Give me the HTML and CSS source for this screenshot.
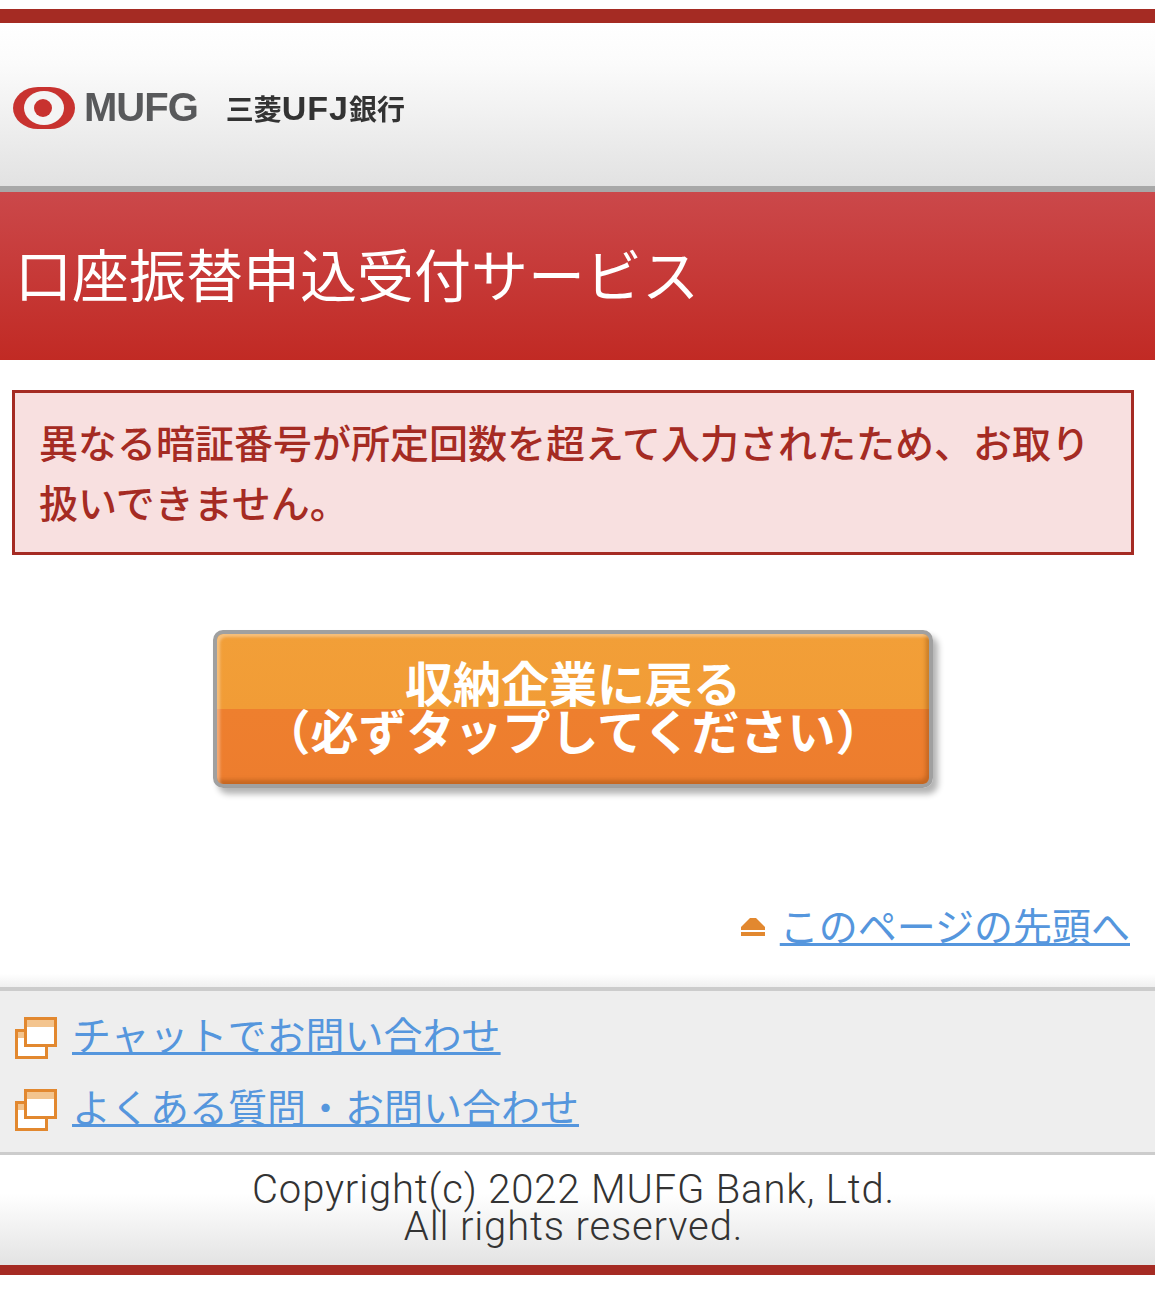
FILE: index.html
```html
<!DOCTYPE html>
<html lang="ja">
<head>
    <meta charset="UTF-8">
    <title>口座振替申込受付サービス</title>
    <link rel="stylesheet" href="styles.css">
</head>
<body>

<header class="site-header">
    <div class="logo">
        <svg class="logo-mark" viewBox="0 0 62 42" width="62" height="42" aria-hidden="true">
            <rect width="62" height="42" rx="25" ry="21" fill="#c8322f"/>
            <ellipse cx="31" cy="21" rx="20" ry="17" fill="#f4f4f4"/>
            <circle cx="30" cy="21" r="9" fill="#c8322f"/>
        </svg>
        <span class="logo-mufg">MUFG</span>
        <span class="logo-bank">三菱<span class="logo-ufj">UFJ</span>銀行</span>
    </div>
</header>

<h1 class="page-title">口座振替申込受付サービス</h1>

<div class="error-box">異なる暗証番号が所定回数を超えて入力されたため、お取り扱いできません。</div>

<div class="button-row">
    <button class="back-button">収納企業に戻る<br>（必ずタップしてください）</button>
</div>

<div class="page-top">
    <svg class="page-top-icon" viewBox="0 0 24 18" width="24" height="18" aria-hidden="true">
        <path d="M9 0 H15 L24 9 V12 H0 V9 Z" fill="#e2882f"/>
        <rect x="0" y="14" width="24" height="4" fill="#e2882f"/>
    </svg>
    <a href="#">このページの先頭へ</a>
</div>

<nav class="footer-links">
    <div class="footer-link">
        <svg class="window-icon" viewBox="0 0 42 42" width="42" height="42" aria-hidden="true">
            <rect x="1.5" y="13.5" width="30" height="27" fill="#fff" stroke="#e2882f" stroke-width="3"/>
            <rect x="3" y="15" width="27" height="6" fill="#f3c48e"/>
            <rect x="10.5" y="1.5" width="30" height="27" fill="#fff" stroke="#e2882f" stroke-width="3"/>
            <rect x="12" y="3" width="27" height="7" fill="#f3c48e"/>
        </svg>
        <a href="#">チャットでお問い合わせ</a>
    </div>
    <div class="footer-link">
        <svg class="window-icon" viewBox="0 0 42 42" width="42" height="42" aria-hidden="true">
            <rect x="1.5" y="13.5" width="30" height="27" fill="#fff" stroke="#e2882f" stroke-width="3"/>
            <rect x="3" y="15" width="27" height="6" fill="#f3c48e"/>
            <rect x="10.5" y="1.5" width="30" height="27" fill="#fff" stroke="#e2882f" stroke-width="3"/>
            <rect x="12" y="3" width="27" height="7" fill="#f3c48e"/>
        </svg>
        <a href="#">よくある質問・お問い合わせ</a>
    </div>
</nav>

<footer class="copyright">
    <div>Copyright(c) 2022 MUFG Bank, Ltd.</div>
    <div>All rights reserved.</div>
</footer>

</body>
</html>
```

FILE: styles.css
```css
body {
    margin: 0;
    padding-top: 9px;
    background: #ffffff;
    font-family: "Noto Sans CJK JP", "Noto Sans", sans-serif;
    color: #333333;
}
.site-header {
    height: 163px;
    border-top: 14px solid #a52b23;
    border-bottom: 6px solid #a8a8a8;
    background: linear-gradient(#ffffff, #fbfbfb 25%, #e2e2e2);
    display: flex;
    align-items: center;
}
.logo {
    display: flex;
    align-items: center;
    padding-left: 13px;
    padding-top: 6px;
    filter: blur(0.7px);
}
.logo-mark {
    margin-right: 9px;
}
.logo-mufg {
    font-family: "Liberation Sans", sans-serif;
    font-weight: 700;
    font-size: 40px;
    letter-spacing: -1px;
    color: #58595b;
    margin-right: 28px;
}
.logo-bank {
    font-weight: 700;
    font-size: 28px;
    color: #333333;
}
.logo-ufj {
    font-family: "Liberation Sans", sans-serif;
    font-size: 34px;
    letter-spacing: 1px;
}
.page-title {
    box-sizing: border-box;
    margin: 0;
    height: 168px;
    padding: 0 0 8px 15px;
    display: flex;
    align-items: center;
    background: linear-gradient(#cb484a, #c12a24);
    color: #ffffff;
    font-size: 57px;
    font-weight: 400;
    line-height: 1;
}
.error-box {
    box-sizing: border-box;
    margin: 30px 21px 0 12px;
    height: 165px;
    padding: 18px 24px;
    border: 3px solid #a52b23;
    background: #f8e0e0;
    color: #a52b23;
    font-size: 39px;
    font-weight: 500;
    line-height: 60px;
}
.button-row {
    display: flex;
    justify-content: center;
    margin: 75px 9px 0 0;
}
.back-button {
    width: 720px;
    height: 158px;
    padding: 0 0 8px;
    border: 4px solid #a0a0a0;
    border-radius: 10px;
    background: linear-gradient(#f29f38 0%, #f19c36 50%, #ee7f2e 50%, #ed7d2e 100%);
    box-shadow: 5px 6px 6px rgba(0, 0, 0, 0.3), inset 3px 3px 3px rgba(255, 255, 255, 0.35), inset -3px -4px 4px rgba(120, 60, 10, 0.35);
    color: #ffffff;
    font-family: inherit;
    font-size: 48px;
    font-weight: 700;
    line-height: 48px;
    cursor: pointer;
}
.page-top {
    margin-top: 111px;
    padding: 0 25px 38px 0;
    display: flex;
    justify-content: flex-end;
    align-items: flex-start;
    gap: 15px;
    background: linear-gradient(#ffffff 85%, #f0f0f0);
    font-size: 39px;
    line-height: 50px;
}
.page-top-icon {
    margin-top: 19px;
}
a {
    color: #5596dd;
}
.footer-links {
    box-sizing: border-box;
    height: 168px;
    padding: 6px 0 0 15px;
    border-top: 4px solid #cccccc;
    border-bottom: 3px solid #cccccc;
    background: #eeeeee;
    font-size: 39px;
}
.footer-link {
    display: flex;
    align-items: center;
    gap: 15px;
    height: 72px;
}
.window-icon {
    margin-top: 10px;
}
.copyright {
    box-sizing: border-box;
    height: 120px;
    padding: 16px 8px 0 0;
    border-bottom: 10px solid #a52b23;
    background: linear-gradient(#ffffff, #ffffff 35%, #e3e3e3);
    text-align: center;
    font-family: Roboto, "Liberation Sans", sans-serif;
    font-size: 40px;
    font-weight: 300;
    letter-spacing: 0.85px;
    line-height: 37px;
    color: #333333;
}
```
